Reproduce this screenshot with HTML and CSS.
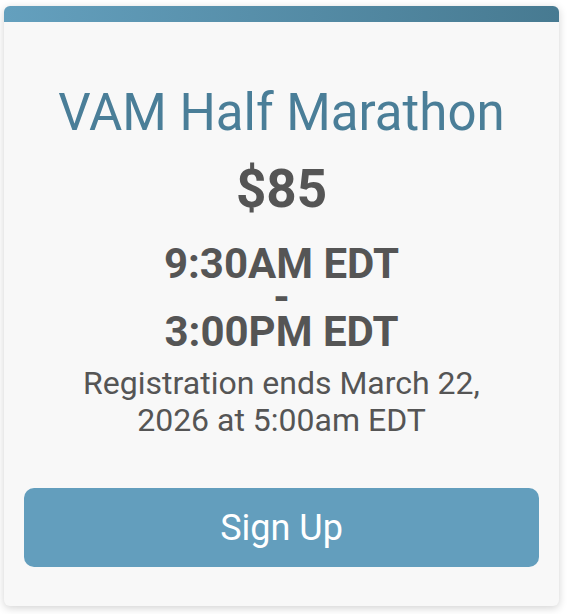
FILE: index.html
```html
<!DOCTYPE html>
<html>
  <head>
    <meta charset="UTF-8" />
    <title>VAM Half Marathon</title>
    <link rel="stylesheet" href="styles.css">
  </head>
  <body>
    <div class="card">
      <div class="card-top"></div>
      <div class="card-body">
        <h2 class="event-name">VAM Half Marathon</h2>
        <p class="price">$85</p>
        <p class="time">9:30AM EDT<br />-<br />3:00PM EDT</p>
        <p class="deadline">Registration ends March 22,<br />2026 at 5:00am EDT</p>
        <button class="signup">Sign Up</button>
      </div>
    </div>
  </body>
</html>
```

FILE: styles.css
```css
* {
  box-sizing: border-box;
}
body {
  margin: 0;
  padding: 6px 9px 8px 4px;
  font-family: Roboto, "Noto Sans", sans-serif;
  background-color: #fff;
}
.card {
  width: 555px;
  height: 600px;
  background: #f8f8f8;
  border-radius: 6px;
  overflow: hidden;
  box-shadow: 0 2px 8px rgba(0, 0, 0, 0.18);
  display: flex;
  flex-direction: column;
}
.card-top {
  height: 16px;
  background: linear-gradient(to right, #64a0be, #477a91);
}
.card-body {
  flex: 1;
  padding: 61px 20px 0;
  display: flex;
  flex-direction: column;
  align-items: center;
  text-align: center;
  color: #555;
}
.event-name {
  margin: 0;
  font-size: 51px;
  font-weight: 400;
  line-height: 60px;
  color: #4a7e98;
}
.price {
  margin: 15px 0 0;
  font-size: 53px;
  font-weight: 700;
  line-height: 62px;
}
.time {
  margin: 27px 0 0;
  font-size: 42px;
  font-weight: 700;
  line-height: 34px;
}
.deadline {
  margin: 16px 0 0;
  font-size: 32px;
  line-height: 37px;
}
.signup {
  margin-top: 49px;
  width: 515px;
  height: 79px;
  border: none;
  border-radius: 10px;
  background-color: #639ebd;
  color: #fff;
  font-family: inherit;
  font-size: 36px;
  cursor: pointer;
}
```
